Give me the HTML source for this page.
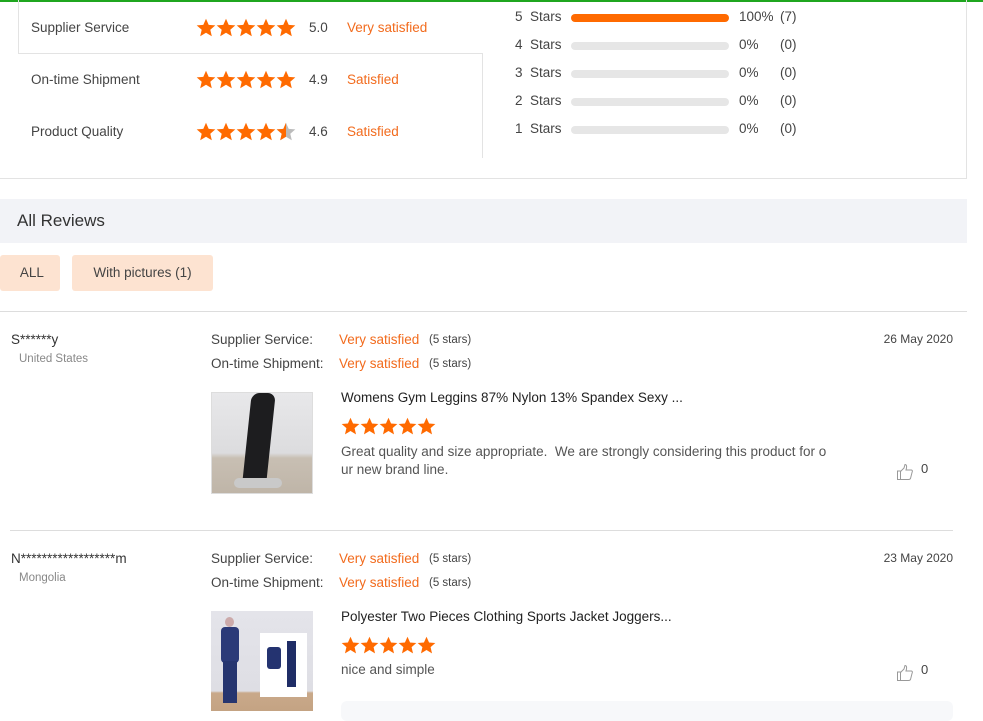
<!DOCTYPE html>
<html><head><meta charset="utf-8"><style>
*{margin:0;padding:0;box-sizing:border-box}
body{width:983px;height:711px;overflow:hidden;background:#fff;font-family:"Liberation Sans",Arial,sans-serif;color:#333;position:relative}
.a{position:absolute;white-space:nowrap}
.lbl{font-size:13.5px;color:#444}
.or{color:#f26b1d}
.st{position:absolute;display:flex}
.st svg{display:block}
.gray{color:#888}
.bar{position:absolute;left:571px;width:158px;height:8px;border-radius:4px;background:#e6e6e6}
.dt{position:absolute;right:30px;font-size:12px;color:#444}
</style></head><body>
<svg width="0" height="0" style="position:absolute"><defs>
<symbol id="s" viewBox="0 0 20 20"><polygon points="10,0.8 12.7,6.9 19.3,7.4 14.3,11.7 15.8,18.3 10,14.8 4.2,18.3 5.7,11.7 0.7,7.4 7.3,6.9" fill="#ff6a00"/></symbol>
<symbol id="h" viewBox="0 0 20 20"><polygon points="10,0.8 12.7,6.9 19.3,7.4 14.3,11.7 15.8,18.3 10,14.8 4.2,18.3 5.7,11.7 0.7,7.4 7.3,6.9" fill="#bbb"/><polygon points="10,0.8 10,14.8 4.2,18.3 5.7,11.7 0.7,7.4 7.3,6.9" fill="#ff6a00"/></symbol>
</defs></svg>
<div class="a" style="left:0;top:0;width:983px;height:2px;background:#1fa61f"></div>
<div class="a" style="left:18px;top:0;width:1px;height:54px;background:#e3e3e3"></div>
<div class="a" style="left:18px;top:53px;width:465px;height:1px;background:#e3e3e3"></div>
<div class="a" style="left:482px;top:53px;width:1px;height:105px;background:#e3e3e3"></div>
<div class="a" style="left:966px;top:0;width:1px;height:179px;background:#e3e3e3"></div>
<div class="a" style="left:0;top:178px;width:967px;height:1px;background:#e3e3e3"></div>

<div class="a lbl" style="left:31px;top:20px">Supplier Service</div>
<div class="st" style="left:196px;top:18px"><svg width="20" height="20"><use href="#s"/></svg><svg width="20" height="20"><use href="#s"/></svg><svg width="20" height="20"><use href="#s"/></svg><svg width="20" height="20"><use href="#s"/></svg><svg width="20" height="20"><use href="#s"/></svg></div>
<div class="a lbl" style="left:309px;top:20px">5.0</div>
<div class="a lbl or" style="left:347px;top:20px">Very satisfied</div>

<div class="a lbl" style="left:31px;top:72px">On-time Shipment</div>
<div class="st" style="left:196px;top:70px"><svg width="20" height="20"><use href="#s"/></svg><svg width="20" height="20"><use href="#s"/></svg><svg width="20" height="20"><use href="#s"/></svg><svg width="20" height="20"><use href="#s"/></svg><svg width="20" height="20"><use href="#s"/></svg></div>
<div class="a lbl" style="left:309px;top:72px">4.9</div>
<div class="a lbl or" style="left:347px;top:72px">Satisfied</div>

<div class="a lbl" style="left:31px;top:124px">Product Quality</div>
<div class="st" style="left:196px;top:122px"><svg width="20" height="20"><use href="#s"/></svg><svg width="20" height="20"><use href="#s"/></svg><svg width="20" height="20"><use href="#s"/></svg><svg width="20" height="20"><use href="#s"/></svg><svg width="20" height="20"><use href="#h"/></svg></div>
<div class="a lbl" style="left:309px;top:124px">4.6</div>
<div class="a lbl or" style="left:347px;top:124px">Satisfied</div>

<div class="a lbl" style="left:515px;top:9px">5&nbsp; Stars</div><div class="bar" style="top:14px;background:#ff6a00"></div><div class="a lbl" style="left:739px;top:9px">100%</div><div class="a lbl" style="left:780px;top:9px">(7)</div>
<div class="a lbl" style="left:515px;top:37px">4&nbsp; Stars</div><div class="bar" style="top:42px"></div><div class="a lbl" style="left:739px;top:37px">0%</div><div class="a lbl" style="left:780px;top:37px">(0)</div>
<div class="a lbl" style="left:515px;top:65px">3&nbsp; Stars</div><div class="bar" style="top:70px"></div><div class="a lbl" style="left:739px;top:65px">0%</div><div class="a lbl" style="left:780px;top:65px">(0)</div>
<div class="a lbl" style="left:515px;top:93px">2&nbsp; Stars</div><div class="bar" style="top:98px"></div><div class="a lbl" style="left:739px;top:93px">0%</div><div class="a lbl" style="left:780px;top:93px">(0)</div>
<div class="a lbl" style="left:515px;top:121px">1&nbsp; Stars</div><div class="bar" style="top:126px"></div><div class="a lbl" style="left:739px;top:121px">0%</div><div class="a lbl" style="left:780px;top:121px">(0)</div>

<div class="a" style="left:0;top:199px;width:967px;height:44px;background:#f2f3f7"></div>
<div class="a" style="left:17px;top:211px;font-size:17px;color:#333">All Reviews</div>
<div class="a" style="left:0;top:255px;width:60px;height:36px;background:#fde3d1;border-radius:3px;font-size:13.5px;color:#444;line-height:36px;text-align:center">&nbsp;ALL</div>
<div class="a" style="left:72px;top:255px;width:141px;height:36px;background:#fde3d1;border-radius:3px;font-size:13.5px;color:#444;line-height:36px;text-align:center">With pictures (1)</div>
<div class="a" style="left:0;top:311px;width:967px;height:1px;background:#ddd"></div>

<div class="a" style="left:11px;top:332px;font-size:13.5px;color:#333">S******y</div>
<div class="a gray" style="left:19px;top:353px;font-size:11.5px">United States</div>
<div class="a lbl" style="left:211px;top:332px">Supplier Service:</div>
<div class="a lbl or" style="left:339px;top:332px">Very satisfied</div>
<div class="a" style="left:429px;top:334px;font-size:11.5px;color:#444">(5 stars)</div>
<div class="a lbl" style="left:211px;top:356px">On-time Shipment:</div>
<div class="a lbl or" style="left:339px;top:356px">Very satisfied</div>
<div class="a" style="left:429px;top:358px;font-size:11.5px;color:#444">(5 stars)</div>
<div class="dt" style="top:332px">26 May 2020</div>
<div class="a" style="left:211px;top:392px;width:102px;height:102px;background:linear-gradient(180deg,#e8e8ea 0%,#dcdcde 60%,#c8bfb3 65%,#bfb5a8 100%);border:1px solid #ddd;overflow:hidden">
<div style="position:absolute;left:35px;top:0;width:24px;height:90px;background:#1d1d1f;border-radius:8px 8px 2px 2px;transform:skewX(-6deg)"></div>
<div style="position:absolute;left:22px;top:85px;width:48px;height:10px;background:#c9c9c9;border-radius:5px"></div>
</div>
<div class="a" style="left:341px;top:390px;font-size:13.5px;color:#222">Womens Gym Leggins 87% Nylon 13% Spandex Sexy ...</div>
<div class="st" style="left:341px;top:417px"><svg width="19" height="19"><use href="#s"/></svg><svg width="19" height="19"><use href="#s"/></svg><svg width="19" height="19"><use href="#s"/></svg><svg width="19" height="19"><use href="#s"/></svg><svg width="19" height="19"><use href="#s"/></svg></div>
<div class="a" style="left:341px;top:443px;font-size:13.5px;color:#555;line-height:18px;white-space:normal;width:500px">Great quality and size appropriate.&nbsp; We are strongly considering this product for o ur new brand line.</div>
<svg class="a" style="left:896px;top:463px" width="18" height="18" viewBox="0 0 18 18"><path d="M1.5 8h3v8.5h-3z M4.5 8.5 L8 5 L9 1.5 Q11 1.5 10.5 5 L10 7 L15.5 7 Q17 7.5 16 9.5 L14.5 15.5 Q14 16.5 12.5 16.5 L4.5 16.5" fill="none" stroke="#999" stroke-width="1"/></svg>
<div class="a" style="left:921px;top:461px;font-size:13px;color:#444">0</div>
<div class="a" style="left:10px;top:530px;width:943px;height:1px;background:#ddd"></div>

<div class="a" style="left:11px;top:551px;font-size:13.5px;color:#333">N******************m</div>
<div class="a gray" style="left:19px;top:572px;font-size:11.5px">Mongolia</div>
<div class="a lbl" style="left:211px;top:551px">Supplier Service:</div>
<div class="a lbl or" style="left:339px;top:551px">Very satisfied</div>
<div class="a" style="left:429px;top:553px;font-size:11.5px;color:#444">(5 stars)</div>
<div class="a lbl" style="left:211px;top:575px">On-time Shipment:</div>
<div class="a lbl or" style="left:339px;top:575px">Very satisfied</div>
<div class="a" style="left:429px;top:577px;font-size:11.5px;color:#444">(5 stars)</div>
<div class="dt" style="top:551px">23 May 2020</div>
<div class="a" style="left:211px;top:611px;width:102px;height:100px;background:linear-gradient(180deg,#e4e4ea 0%,#dedee4 80%,#c9a98a 82%,#c4a383 100%);overflow:hidden">
<div style="position:absolute;left:14px;top:6px;width:9px;height:10px;background:#caa;border-radius:50%"></div>
<div style="position:absolute;left:10px;top:16px;width:18px;height:36px;background:#2b3a78;border-radius:4px"></div>
<div style="position:absolute;left:12px;top:50px;width:14px;height:42px;background:#26356f"></div>
<div style="position:absolute;left:49px;top:22px;width:47px;height:64px;background:#fff"></div>
<div style="position:absolute;left:56px;top:36px;width:14px;height:22px;background:#243370;border-radius:3px"></div>
<div style="position:absolute;left:76px;top:30px;width:9px;height:46px;background:#1f2d66"></div>
</div>
<div class="a" style="left:341px;top:609px;font-size:13.5px;color:#222">Polyester Two Pieces Clothing Sports Jacket Joggers...</div>
<div class="st" style="left:341px;top:636px"><svg width="19" height="19"><use href="#s"/></svg><svg width="19" height="19"><use href="#s"/></svg><svg width="19" height="19"><use href="#s"/></svg><svg width="19" height="19"><use href="#s"/></svg><svg width="19" height="19"><use href="#s"/></svg></div>
<div class="a" style="left:341px;top:662px;font-size:13.5px;color:#555">nice and simple</div>
<svg class="a" style="left:896px;top:664px" width="18" height="18" viewBox="0 0 18 18"><path d="M1.5 8h3v8.5h-3z M4.5 8.5 L8 5 L9 1.5 Q11 1.5 10.5 5 L10 7 L15.5 7 Q17 7.5 16 9.5 L14.5 15.5 Q14 16.5 12.5 16.5 L4.5 16.5" fill="none" stroke="#999" stroke-width="1"/></svg>
<div class="a" style="left:921px;top:662px;font-size:13px;color:#444">0</div>
<div class="a" style="left:341px;top:701px;width:612px;height:20px;background:#f7f8fa;border-radius:6px"></div>
</body></html>
